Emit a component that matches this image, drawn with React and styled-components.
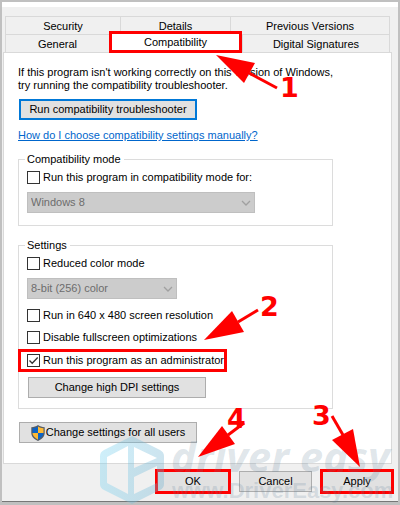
import React from 'react';
import styled, { createGlobalStyle } from 'styled-components';

const GlobalStyle = createGlobalStyle`
  * {
    box-sizing: border-box;
  }

  body {
    margin: 0;
    background: #c0c0c0;
    color: #000;
    font: 11px/13px "Liberation Sans", Arial, sans-serif;
  }

  button, select, input {
    font: inherit;
    color: inherit;
    margin: 0;
  }
`;

const Dialog = styled.main`
  position: relative;
  border: 2px solid #c0c0c0;
  border-bottom-width: 3px;
  background: #f0f0f0;
`;

const TitleEdge = styled.div`
  height: 5px;
  background: #fff;
`;

const Body = styled.div`
  padding: 9px 6px 0 1px;
`;

const Tabs = styled.nav`
  padding: 0 2px;
`;

const TabRow = styled.div`
  display: grid;
  grid-template-columns: ${props => props.$columns};
  height: 18px;
  border-right: 1px solid #d9d9d9;
`;

const Tab = styled.button`
  padding: 1px 0 0;
  border: 0;
  border-top: 1px solid #d9d9d9;
  border-left: 1px solid #d9d9d9;
  background: #f0f0f0;
  line-height: 13px;
  white-space: nowrap;
`;

const ActiveTab = styled(Tab)`
  position: relative;
  z-index: 1;
  margin: -3px 0 -1px;
  padding: 0;
  border: 3px solid #f00;
  background: #fff;
`;

const Panel = styled.section`
  padding: 13px 14px 20px;
  border: 1px solid #d9d9d9;
  background: #fff;
`;

const Intro = styled.p`
  margin: 0 0 7px;
`;

const PushButton = styled.button`
  display: flex;
  align-items: center;
  justify-content: center;
  gap: 1px;
  width: ${props => props.$width || 178}px;
  height: 21px;
  padding: 0;
  border: 1px solid #adadad;
  background: #e1e1e1;
  white-space: nowrap;
`;

const DefaultButton = styled(PushButton)`
  margin-left: 1px;
  border: 2px solid #0078d7;
`;

const UsersButton = styled(PushButton)`
  margin: 13px 0 0 1px;
`;

const DpiButton = styled(PushButton)`
  margin: 5px 0 0 1px;
`;

const HelpLink = styled.a`
  display: block;
  width: fit-content;
  margin: 8px 0 10px;
  color: #0066cc;
  line-height: 14px;
`;

const Group = styled.fieldset`
  min-width: 0;
  margin: 0 44px 0 0;
  padding: 5px 8px ${props => props.$bottom}px;
  border: 1px solid #dcdcdc;

  & + & {
    margin-top: 12px;
  }

  legend {
    padding: 0 3px 0 2px;
    margin-left: -2px;
    line-height: 14px;
  }
`;

const CheckLabel = styled.label`
  display: flex;
  align-items: center;
  gap: 3px;
  width: fit-content;
  white-space: nowrap;
`;

const CheckList = styled.div`
  display: flex;
  flex-direction: column;
  gap: 9px;
  margin-top: 10px;
`;

const Highlight = styled.div`
  position: relative;
  width: fit-content;
  margin: 5px 0 0 -9px;
  padding: 2px 0 2px 6px;
  border: 3px solid #f00;
`;

const Box = styled.span`
  display: grid;
  width: 13px;
  height: 13px;

  input, svg {
    grid-area: 1 / 1;
    width: 13px;
    height: 13px;
  }

  input {
    appearance: none;
    border: 1px solid #333;
    background: #fff;
  }

  svg {
    z-index: 1;
    visibility: hidden;
    pointer-events: none;
  }

  input:checked + svg {
    visibility: visible;
  }
`;

const SelectWrap = styled.div`
  display: grid;
  align-items: center;
  width: ${props => props.$width}px;
  max-width: 100%;
  margin-top: 8px;

  select, svg {
    grid-area: 1 / 1;
  }

  select {
    appearance: none;
    width: 100%;
    height: 21px;
    padding: 0 20px 0 3px;
    border: 1px solid #bfbfbf;
    border-radius: 0;
    background: #ccc;
    color: #6d6d6d;
    opacity: 1;
  }

  svg {
    z-index: 1;
    justify-self: end;
    margin-right: 4px;
    pointer-events: none;
  }
`;

const Footer = styled.footer`
  display: flex;
  justify-content: flex-end;
  align-items: center;
  gap: 8px;
  padding: 5px 4px 7px;
  border-bottom: 1px solid #777;
`;

const Marked = styled.div`
  position: relative;

  ${PushButton} {
    height: 25px;
    border: 3px solid #f00;
  }
`;

const Callout = styled.svg`
  position: absolute;
  z-index: 3;
  left: ${props => props.$left}px;
  top: ${props => props.$top}px;
  overflow: visible;
  pointer-events: none;
  fill: #f00;
  stroke: none;

  line {
    stroke: #f00;
    stroke-width: 3;
  }

  text {
    font: bold 27px "DejaVu Sans", Verdana, sans-serif;
  }
`;

const Watermark = styled.svg`
  position: absolute;
  z-index: 2;
  right: 0;
  bottom: -3px;
  pointer-events: none;
`;

const Check = ({ label, defaultChecked }) => (
  <CheckLabel>
    <Box>
      <input type="checkbox" defaultChecked={defaultChecked} />
      <svg viewBox="0 0 13 13" fill="none" stroke="#333" strokeWidth="1.3">
        <path d="M2.5 6.5 5.2 9.3 10.7 3.5" />
      </svg>
    </Box>
    {label}
  </CheckLabel>
);

const DisabledSelect = ({ label, value, width }) => (
  <SelectWrap $width={width}>
    <select aria-label={label} disabled defaultValue={value}>
      <option>{value}</option>
    </select>
    <svg width="10" height="6" viewBox="0 0 10 6" fill="none" stroke="#a0a0a0" strokeWidth="1.3">
      <path d="M1 1 5 5 9 1" />
    </svg>
  </SelectWrap>
);

const Shield = () => (
  <svg width="14" height="16" viewBox="0 0 14 16">
    <path d="M7 0C5 1.5 3 2 .3 2.2V8c0 3.7 3 6.3 6.7 8 3.7-1.7 6.7-4.3 6.7-8V2.2C11 2 9 1.5 7 0Z" fill="#555c66" />
    <path d="M7 1.5C5.4 2.6 3.7 3.1 1.5 3.3V8H7Z" fill="#0b63c5" />
    <path d="M7 1.5c1.6 1.1 3.3 1.6 5.5 1.8V8H7Z" fill="#fdb933" />
    <path d="M1.5 8c.1 3 2.4 5 5.5 6.7V8Z" fill="#fdb933" />
    <path d="M12.5 8c-.1 3-2.4 5-5.5 6.7V8Z" fill="#0b63c5" />
  </svg>
);

// Arrow points are relative to the tip, which sits at 0,0
const Arrow = ({ left, top, head, from, to, number, at }) => (
  <Callout $left={left} $top={top} width="1" height="1">
    <polygon points={`0,0 ${head}`} />
    <line x1={from[0]} y1={from[1]} x2={to[0]} y2={to[1]} />
    <text x={at[0]} y={at[1]}>{number}</text>
  </Callout>
);

const App = () => (
  <>
    <GlobalStyle />
    <Dialog>
      <TitleEdge />
      <Body>
        <Tabs>
          <TabRow $columns="115fr 110fr 159fr">
            <Tab>Security</Tab>
            <Tab>Details</Tab>
            <Tab>Previous Versions</Tab>
          </TabRow>
          <TabRow $columns="104fr 133fr 147fr">
            <Tab>General</Tab>
            <ActiveTab>
              Compatibility
              <Arrow left={104} top={21} head="39,8 28,28" from={[33, 18]} to={[61, 33]} number="1" at={[64, 42]} />
            </ActiveTab>
            <Tab>Digital Signatures</Tab>
          </TabRow>
        </Tabs>
        <Panel>
          <Intro>
            If this program isn't working correctly on this version of Windows,<br />
            try running the compatibility troubleshooter.
          </Intro>
          <DefaultButton>Run compatibility troubleshooter</DefaultButton>
          <HelpLink href="#help">How do I choose compatibility settings manually?</HelpLink>

          <Group $bottom={12}>
            <legend>Compatibility mode</legend>
            <Check label="Run this program in compatibility mode for:" />
            <DisabledSelect label="Windows version" value="Windows 8" width={228} />
          </Group>

          <Group $bottom={10}>
            <legend>Settings</legend>
            <Check label="Reduced color mode" />
            <DisabledSelect label="Color depth" value="8-bit (256) color" width={150} />
            <CheckList>
              <Check label="Run in 640 x 480 screen resolution" />
              <Check label="Disable fullscreen optimizations" />
            </CheckList>
            <Highlight>
              <Check label="Run this program as an administrator" defaultChecked />
              <Arrow left={183} top={-12} head="28,-29 40,-8" from={[34, -18]} to={[54, -30]} number="2" at={[56, -24]} />
            </Highlight>
            <DpiButton>Change high DPI settings</DpiButton>
          </Group>

          <UsersButton>
            <Shield />
            Change settings for all users
          </UsersButton>
        </Panel>
      </Body>
      <Footer>
        <Marked>
          <PushButton $width={76}>OK</PushButton>
          <Arrow left={43} top={-12} head="24,-31 37,-13" from={[30, -22]} to={[46, -34]} number="4" at={[29, -29]} />
        </Marked>
        <PushButton $width={73}>Cancel</PushButton>
        <Marked>
          <PushButton $width={74}>Apply</PushButton>
          <Arrow left={40} top={-2} head="-28,-27 -7,-38" from={[-17, -32]} to={[-28, -51]} number="3" at={[-48, -42]} />
        </Marked>
      </Footer>
      <Watermark width="298" height="70" viewBox="0 0 298 70">
        <defs>
          <linearGradient id="hex" x1="0" y1="0" x2="1" y2="0">
            <stop offset="0" stopColor="#6fd0f0" />
            <stop offset="1" stopColor="#6cb0d0" />
          </linearGradient>
        </defs>
        <path
          fill="url(#hex)"
          fillOpacity="0.34"
          fillRule="evenodd"
          d="M32 1 60 15Q64 17 64 21V49Q64 53 60 55L32 69 4 55Q0 53 0 49V21Q0 17 4 15ZM28 11 7 22V48L28 59ZM34 12V33L57 23ZM34 42V59L57 48V31Z"
        />
        <g fill="#5f7f98" fillOpacity="0.2">
          <text x="71" y="37" fontFamily="'Noto Sans', sans-serif" fontSize="42" fontWeight="700" fontStyle="italic">driver easy</text>
          <text x="72" y="63" fontFamily="'Liberation Sans', Arial, sans-serif" fontSize="22" fontWeight="700">www.DriverEasy.com</text>
        </g>
      </Watermark>
    </Dialog>
  </>
);

export default App;
